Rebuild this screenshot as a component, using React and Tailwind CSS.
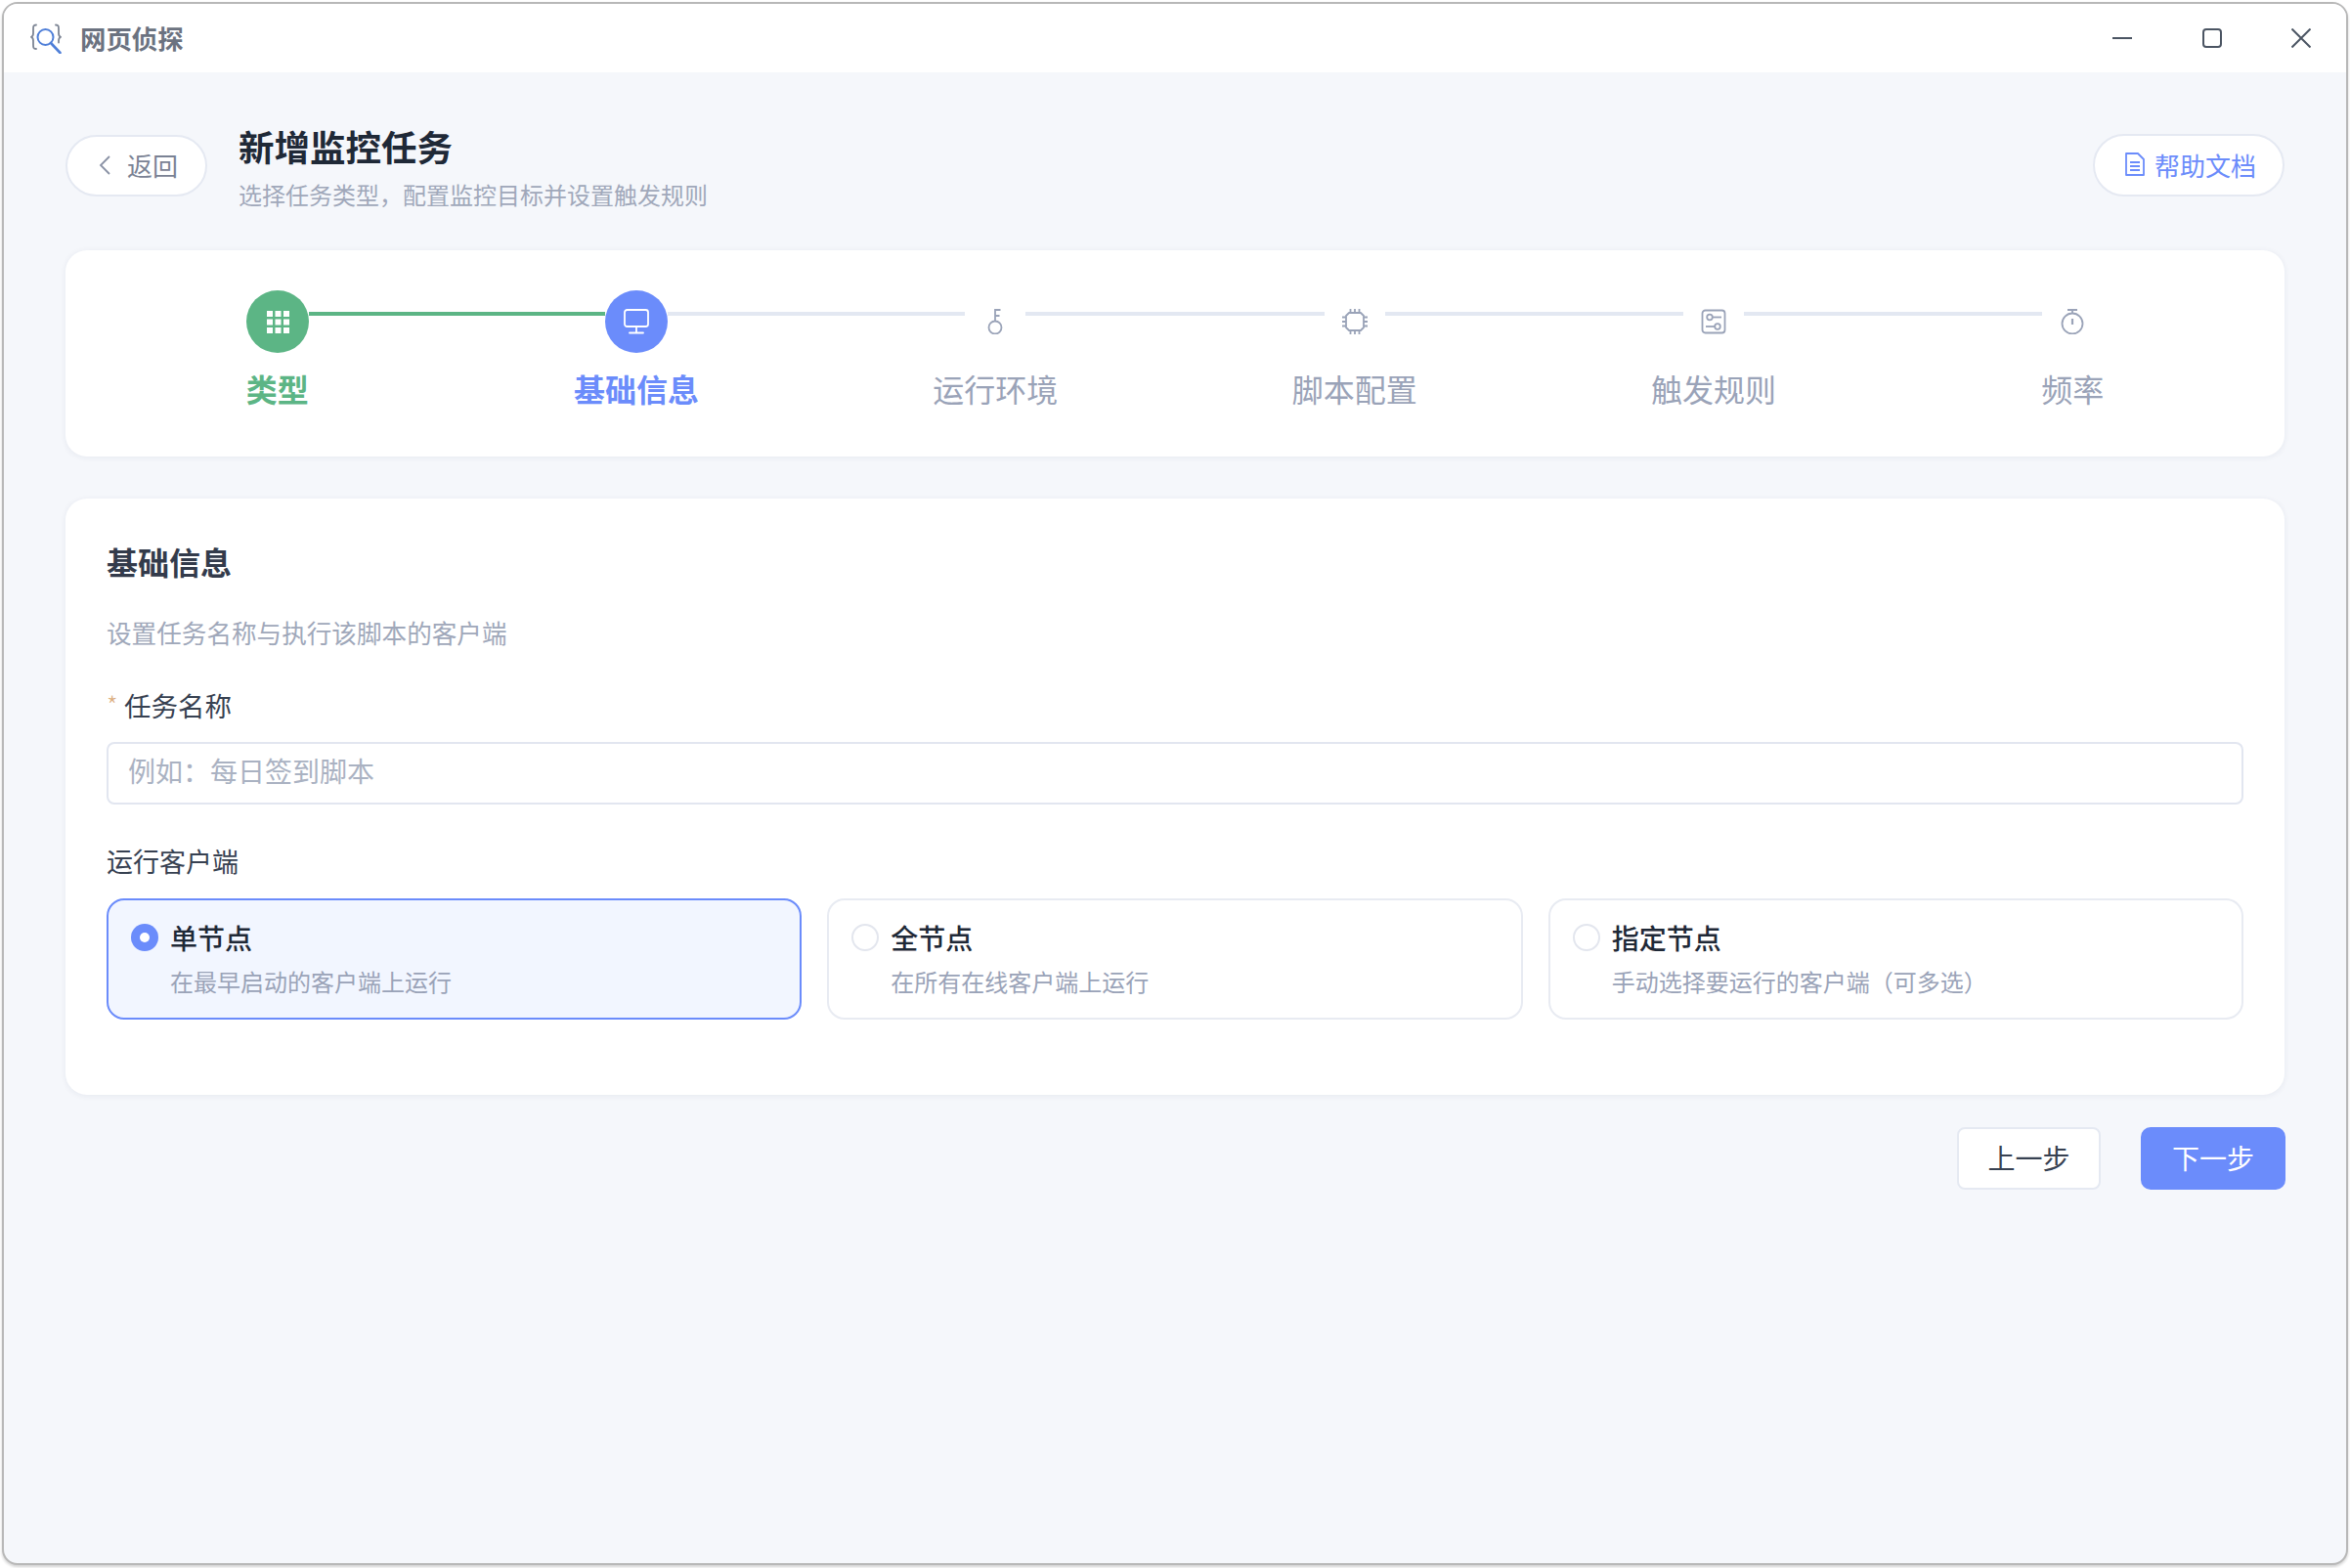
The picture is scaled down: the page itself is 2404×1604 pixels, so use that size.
import { useState } from "react";

const font = { fontFamily: '"Noto Sans CJK SC", "Noto Sans", sans-serif' };

function AppLogo() {
  return (
    <svg width="32" height="32" viewBox="0 0 32 32" fill="none" strokeLinecap="round" strokeLinejoin="round">
      <path d="M6 2.500C3 2.500 3 4 3 7v4C3 13 2.500 14.200 1 14.800C2.500 15.400 3 16.600 3 18.500v4C3 25.500 3 27 6 27" stroke="#7d8594" strokeWidth="1.800" />
      <path d="M26 2.500c3 0 3 1.500 3 4.500v4c0 2 .5 3.200 2 3.800-1.500.6-2 1.800-2 3.700v2" stroke="#7d8594" strokeWidth="1.800" />
      <circle cx="15.500" cy="15" r="8" stroke="#4f7fd8" strokeWidth="2" />
      <path d="M21 21L30.500 31" stroke="#4f7fd8" strokeWidth="2.600" />
    </svg>
  );
}

function WindowControls() {
  return (
    <div className="flex items-center gap-[71.500px] pr-[36px] text-[#4b5563]">
      <svg width="20" height="20" viewBox="0 0 20 20" fill="none" stroke="currentColor" strokeWidth="2">
        <path d="M0 10h20" />
      </svg>
      <svg width="20" height="20" viewBox="0 0 20 20" fill="none" stroke="currentColor" strokeWidth="2">
        <rect x="1" y="1" width="18" height="18" rx="3" />
      </svg>
      <svg width="20" height="20" viewBox="0 0 20 20" fill="none" stroke="currentColor" strokeWidth="2">
        <path d="M0.500 0.500l19 19M19.500 0.500l-19 19" />
      </svg>
    </div>
  );
}

function GridIcon() {
  const cells = [0, 8.500, 17];
  return (
    <svg width="23" height="23" viewBox="0 0 23 23" fill="#fff">
      {cells.map((y) =>
        cells.map((x) => <rect key={`${x}-${y}`} x={x} y={y} width="6" height="6" />)
      )}
    </svg>
  );
}

function MonitorIcon() {
  return (
    <svg width="26" height="26" viewBox="0 0 26 26" fill="none" stroke="#fff" strokeWidth="1.800" strokeLinecap="round" strokeLinejoin="round">
      <rect x="1" y="1" width="24" height="17" rx="2.500" />
      <path d="M13 18v6M6 24.500h14" />
    </svg>
  );
}

function KeyIcon() {
  return (
    <svg width="26" height="26" viewBox="0 0 26 26" fill="none" stroke="#9aa3b8" strokeWidth="1.800">
      <circle cx="13" cy="19" r="6.500" />
      <path d="M13 12.500V1h5.500M13 7h4.500" />
    </svg>
  );
}

function ChipIcon() {
  return (
    <svg width="26" height="26" viewBox="0 0 26 26" fill="none" stroke="#9aa3b8" strokeWidth="1.800" strokeLinejoin="round">
      <path d="M7 4h12l3 3v12l-3 3H7l-3-3V7z" />
      <path d="M8.500 0v4M13 0v4M17.500 0v4M8.500 22v4M13 22v4M17.500 22v4M0 8.500h4M0 13h4M0 17.500h4M22 8.500h4M22 13h4M22 17.500h4" />
    </svg>
  );
}

function RulesIcon() {
  return (
    <svg width="26" height="26" viewBox="0 0 26 26" fill="none" stroke="#9aa3b8" strokeWidth="1.800">
      <rect x="1.500" y="1.500" width="23" height="23" rx="3" />
      <circle cx="9" cy="8.500" r="2.800" />
      <path d="M12 8.500h9" />
      <circle cx="17" cy="18" r="2.800" />
      <path d="M5 18h9" />
    </svg>
  );
}

function TimerIcon() {
  return (
    <svg width="26" height="26" viewBox="0 0 26 26" fill="none" stroke="#9aa3b8" strokeWidth="1.800">
      <circle cx="13" cy="15" r="10.500" />
      <path d="M8 1h10M13 1v3.500" />
      <path d="M13 10v6" strokeWidth="2.200" />
    </svg>
  );
}

const steps = [
  { label: "类型", icon: <GridIcon />, state: "done" },
  { label: "基础信息", icon: <MonitorIcon />, state: "active" },
  { label: "运行环境", icon: <KeyIcon />, state: "todo" },
  { label: "脚本配置", icon: <ChipIcon />, state: "todo" },
  { label: "触发规则", icon: <RulesIcon />, state: "todo" },
  { label: "频率", icon: <TimerIcon />, state: "todo" },
];

const clientOptions = [
  { id: "single", title: "单节点", desc: "在最早启动的客户端上运行" },
  { id: "all", title: "全节点", desc: "在所有在线客户端上运行" },
  { id: "custom", title: "指定节点", desc: "手动选择要运行的客户端（可多选）" },
];

function lineClass(state) {
  if (state === "done") return "mt-[22px] h-[4px] flex-1 bg-[#5cb585]";
  if (state === "active") return "mt-[22px] -mr-[1px] h-[4px] flex-1 bg-[#e3e8f2]";
  return "mt-[22px] -mx-[1px] h-[4px] flex-1 bg-[#e3e8f2]";
}

function Stepper() {
  return (
    <div className="rounded-[22px] bg-white px-[33px] pt-[41px] pb-[48px] shadow-[0_1px_6px_rgba(30,40,80,0.07)]">
      <div className="mx-[152px] flex items-start">
        {steps.map((step, i) => (
          <div key={step.label} className={i < steps.length - 1 ? "flex flex-1 items-start" : "flex items-start"}>
            {step.state === "done" && (
              <div className="flex h-[64px] w-[64px] shrink-0 items-center justify-center rounded-full bg-[#5cb585]">{step.icon}</div>
            )}
            {step.state === "active" && (
              <div className="flex h-[64px] w-[64px] shrink-0 items-center justify-center rounded-full bg-[#6b8cfb]">{step.icon}</div>
            )}
            {step.state === "todo" && (
              <div className="flex h-[64px] w-[64px] shrink-0 items-center justify-center">{step.icon}</div>
            )}
            {i < steps.length - 1 && <div className={lineClass(step.state)} />}
          </div>
        ))}
      </div>
      <div className="mt-[14px] grid grid-cols-6">
        {steps.map((step) => (
          <div
            key={step.label}
            className={
              step.state === "done"
                ? "text-center text-[32px] leading-[44px] font-semibold text-[#5cb585]"
                : step.state === "active"
                  ? "text-center text-[32px] leading-[44px] font-semibold text-[#6b8cfb]"
                  : "text-center text-[32px] leading-[44px] text-[#9aa3b8]"
            }
          >
            {step.label}
          </div>
        ))}
      </div>
    </div>
  );
}

export default function App() {
  const [client, setClient] = useState("single");

  return (
    <div className="h-[1604px] w-full bg-white p-[2px]" style={font}>
      <div className="flex h-[1599px] w-full flex-col overflow-hidden rounded-[16px] border-2 border-[#b8b8b8] bg-[#f5f7fb] shadow-[0_2px_3px_rgba(0,0,0,0.18)]">
        <div className="flex h-[70px] shrink-0 items-center justify-between bg-white pl-[27px]">
          <div className="flex items-center gap-[19px]">
            <AppLogo />
            <span className="text-[26.400px] leading-[36px] font-semibold text-[#6b7280]">网页侦探</span>
          </div>
          <WindowControls />
        </div>

        <div className="flex flex-1 flex-col px-[63px] pt-[48px]">
          <div className="mb-[41px] flex h-[93px] items-center justify-between">
            <div className="flex items-center gap-[32px]">
              <button className="mt-[1px] flex h-[63px] w-[145px] items-center justify-center gap-[17px] rounded-full border-2 border-[#e5e9f2] bg-white pb-[1px] pl-[4px] text-[26px] text-[#7a8294]">
                <svg width="12" height="20" viewBox="0 0 12 20" fill="none" stroke="#8a92a5" strokeWidth="1.800">
                  <path d="M11 1L2 10l9 9" />
                </svg>
                返回
              </button>
              <div className="flex flex-col gap-[5px] pt-[3px]">
                <h1 className="text-[36.500px] leading-[52px] font-bold text-[#1f2937]">新增监控任务</h1>
                <p className="text-[24px] leading-[36px] text-[#a0a8ba]">选择任务类型，配置监控目标并设置触发规则</p>
              </div>
            </div>
            <button className="flex h-[64px] w-[196px] items-center justify-center gap-[10px] rounded-full border-2 border-[#e5e9f2] bg-white pb-[1px] pl-[4px] text-[26px] text-[#6b8cfb]">
              <svg width="20" height="24" viewBox="0 0 20 24" fill="none" stroke="#6b8cfb" strokeWidth="1.800" strokeLinejoin="round">
                <path d="M1 1h12l6 6v16H1z" />
                <path d="M5 10h10M5 14h10M5 18h10" />
              </svg>
              帮助文档
            </button>
          </div>

          <Stepper />

          <div className="mt-[43px] rounded-[22px] bg-white px-[42px] pt-[41px] pb-[77px] shadow-[0_1px_6px_rgba(30,40,80,0.07)]">
            <h2 className="text-[32px] leading-[46px] font-bold text-[#333b4b]">基础信息</h2>
            <p className="mt-[32px] text-[25.600px] leading-[36px] text-[#a0a8ba]">设置任务名称与执行该脚本的客户端</p>

            <label className="mt-[36px] flex items-center text-[27.500px] leading-[40px] text-[#374151]">
              <span className="w-[18px] text-[26px] leading-[40px] font-light text-[#dcae80]">*</span>
              任务名称
            </label>
            <input
              placeholder="例如：每日签到脚本"
              className="mt-[18px] block h-[64px] w-full rounded-[8px] border-2 border-[#e2e6f0] bg-white px-[20px] pb-[6px] text-[28px] text-[#374151] outline-none placeholder:text-[#aab2c2]"
            />

            <div className="mt-[38px] text-[27px] leading-[40px] text-[#374151]">运行客户端</div>
            <div className="mt-[18px] grid grid-cols-3 gap-[26px]">
              {clientOptions.map((option) => {
                const selected = client === option.id;
                return (
                  <div
                    key={option.id}
                    onClick={() => setClient(option.id)}
                    className={
                      selected
                        ? "flex h-[124px] cursor-pointer gap-[12px] rounded-[18px] border-2 border-[#6b8cfb] bg-[#f2f6ff] pt-[19px] pl-[23px]"
                        : "flex h-[124px] cursor-pointer gap-[12px] rounded-[18px] border-2 border-[#e8ebf2] bg-white pt-[19px] pl-[23px]"
                    }
                  >
                    {selected ? (
                      <span className="mt-[5px] flex h-[28px] w-[28px] shrink-0 items-center justify-center rounded-full bg-[#6b8cfb]">
                        <span className="h-[10px] w-[10px] rounded-full bg-white" />
                      </span>
                    ) : (
                      <span className="mt-[5px] h-[28px] w-[28px] shrink-0 rounded-full border-2 border-[#e3e6ee] bg-white" />
                    )}
                    <div>
                      <div className="text-[28px] leading-[38px] font-medium text-[#1f2937]">{option.title}</div>
                      <div className="mt-[9px] text-[24px] leading-[34px] text-[#9aa3b8]">{option.desc}</div>
                    </div>
                  </div>
                );
              })}
            </div>
          </div>

          <div className="mt-[33px] -mr-[1px] flex justify-end gap-[41px]">
            <button className="h-[64px] w-[147px] rounded-[8px] border-2 border-[#e5e9f2] bg-white pb-[3px] text-[28px] text-[#374151]">上一步</button>
            <button className="h-[64px] w-[148px] rounded-[10px] bg-[#6b8cfb] pb-[3px] text-[28px] text-white">下一步</button>
          </div>
        </div>
      </div>
    </div>
  );
}
